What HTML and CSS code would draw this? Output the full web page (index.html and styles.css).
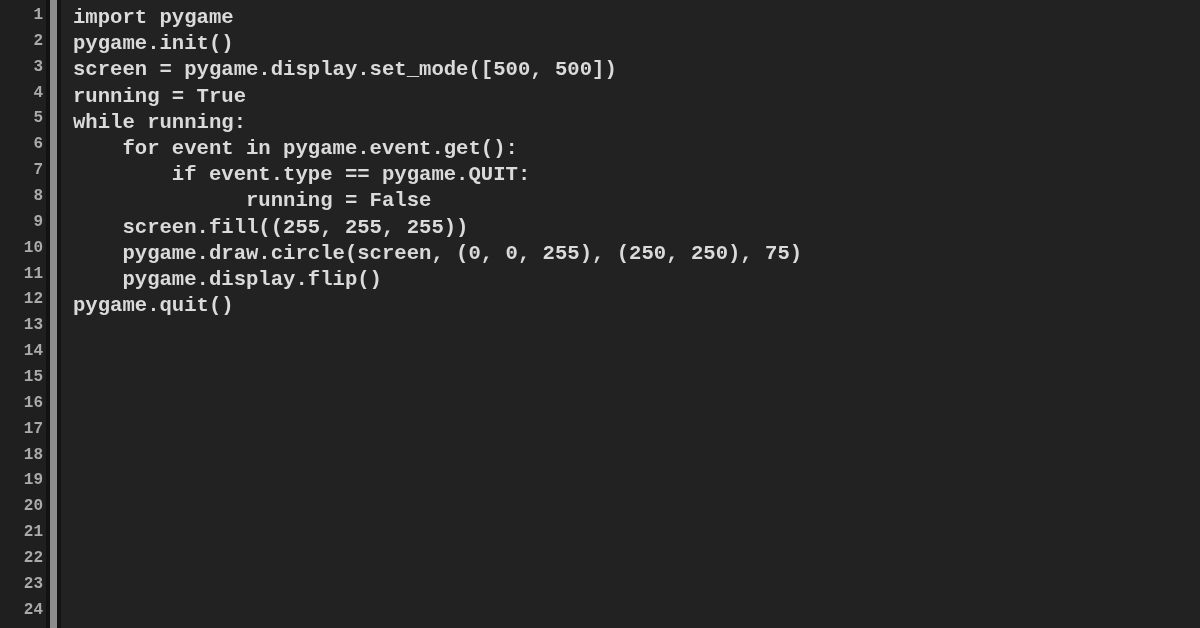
FILE: index.html
```html
<!DOCTYPE html>
<html lang="en">
<head>
<meta charset="utf-8">
<title>pygame editor</title>
<link rel="stylesheet" href="styles.css">
</head>
<body>
<div class="editor">
  <div class="gutter">
    <div class="ln">1</div><div class="ln">2</div><div class="ln">3</div><div class="ln">4</div>
    <div class="ln">5</div><div class="ln">6</div><div class="ln">7</div><div class="ln">8</div>
    <div class="ln">9</div><div class="ln">10</div><div class="ln">11</div><div class="ln">12</div>
    <div class="ln">13</div><div class="ln">14</div><div class="ln">15</div><div class="ln">16</div>
    <div class="ln">17</div><div class="ln">18</div><div class="ln">19</div><div class="ln">20</div>
    <div class="ln">21</div><div class="ln">22</div><div class="ln">23</div><div class="ln">24</div>
  </div>
  <div class="bar"></div>
  <pre class="code"><div class="line">import pygame</div><div class="line">pygame.init()</div><div class="line">screen = pygame.display.set_mode([500, 500])</div><div class="line">running = True</div><div class="line">while running:</div><div class="line">    for event in pygame.event.get():</div><div class="line">        if event.type == pygame.QUIT:</div><div class="line">              running = False</div><div class="line">    screen.fill((255, 255, 255))</div><div class="line">    pygame.draw.circle(screen, (0, 0, 255), (250, 250), 75)</div><div class="line">    pygame.display.flip()</div><div class="line">pygame.quit()</div></pre>
</div>
</body>
</html>
```
FILE: styles.css
```css
html, body {
  margin: 0;
  padding: 0;
  background: #222222;
  width: 1200px;
  height: 628px;
  overflow: hidden;
}
.editor {
  display: flex;
  height: 628px;
  background: #222222;
}
.gutter {
  width: 43px;
  padding-right: 3px;
  padding-top: 3px;
  background: #1f1f1f;
  text-align: right;
  font-family: "Liberation Mono", "DejaVu Sans Mono", monospace;
  font-size: 16px;
  font-weight: bold;
  color: #aaaaaa;
  filter: blur(0.6px);
}
.ln {
  height: 25.87px;
  line-height: 25.87px;
}
.bar {
  width: 7px;
  background: #8c8c8c;
  border-left: 4px solid #121212;
  border-right: 4px solid #141414;
}
.code {
  margin: 0;
  padding: 5px 0 0 12px;
  font-family: "Liberation Mono", "DejaVu Sans Mono", monospace;
  font-size: 20.6px;
  font-weight: bold;
  color: #dadada;
  filter: blur(0.7px);
}
.line {
  height: 26.2px;
  line-height: 26.2px;
  white-space: pre;
}
```
